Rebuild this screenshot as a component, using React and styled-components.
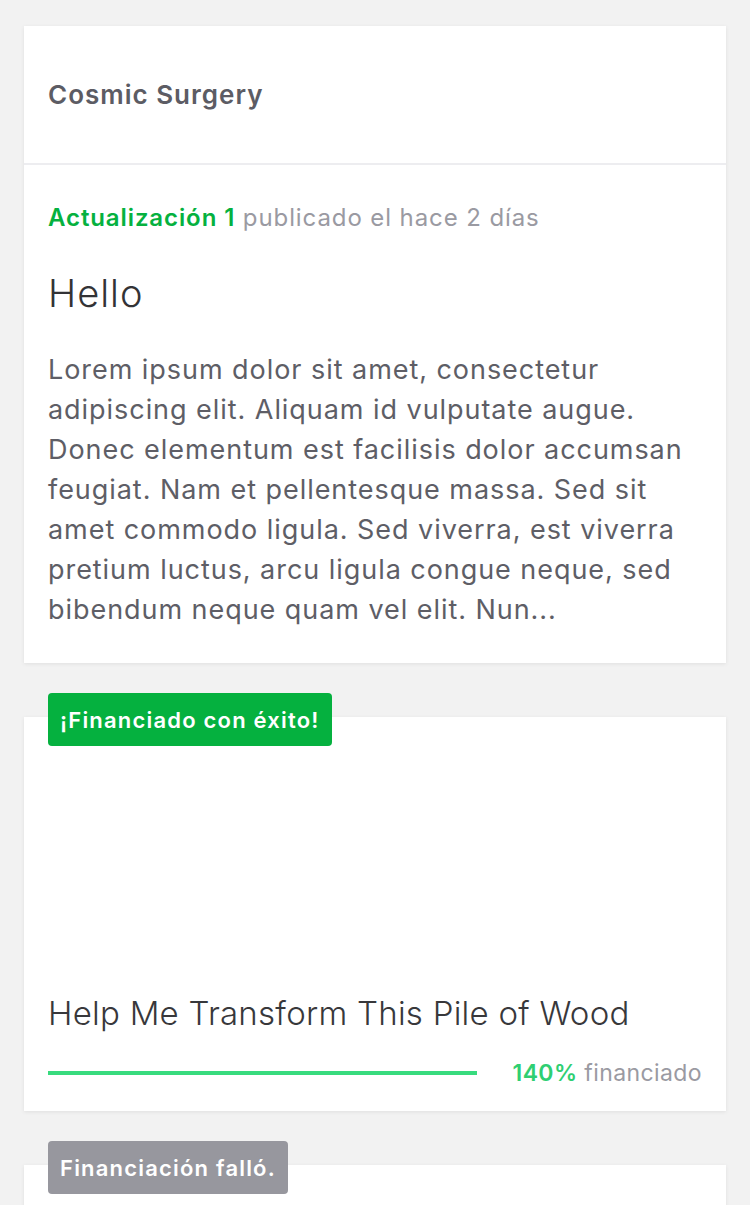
import styled, { createGlobalStyle } from 'styled-components';

const GlobalStyle = createGlobalStyle`
  html, body {
    margin: 0;
    padding: 0;
    background: #f2f2f2;
  }
  body {
    font-family: 'Inter', 'Roboto', sans-serif;
    -webkit-font-smoothing: antialiased;
  }
`;

const projects = [
  { id: 1, status: 'success', label: '¡Financiado con éxito!', title: 'Help Me Transform This Pile of Wood', percent: 140 },
  { id: 2, status: 'failed', label: 'Financiación falló.', title: 'Another Project', percent: 20 },
];

export default function App() {
  return (
    <Page>
      <GlobalStyle />
      <Card>
        <CardHeader>
          <ProjectName>Cosmic Surgery</ProjectName>
        </CardHeader>
        <UpdateBody>
          <UpdateMeta>
            <UpdateNumber>Actualización 1</UpdateNumber> publicado el hace 2 días
          </UpdateMeta>
          <UpdateTitle>Hello</UpdateTitle>
          <UpdateText>
            Lorem ipsum dolor sit amet, consectetur adipiscing elit. Aliquam id vulputate augue.
            Donec elementum est facilisis dolor accumsan feugiat. Nam et pellentesque massa. Sed sit
            amet commodo ligula. Sed viverra, est viverra pretium luctus, arcu ligula congue neque, sed
            bibendum neque quam vel elit. Nun...
          </UpdateText>
        </UpdateBody>
      </Card>

      {projects.map((p) => (
        <ProjectItem key={p.id}>
          <StatusBadge $status={p.status}>{p.label}</StatusBadge>
          <Card>
            <Cover />
            <ProjectInfo>
              <ProjectTitle>{p.title}</ProjectTitle>
              <ProgressRow>
                <ProgressTrack>
                  <ProgressFill style={{ width: `${Math.min(p.percent, 100)}%` }} />
                </ProgressTrack>
                <Funded>
                  <Percent>{p.percent}%</Percent> financiado
                </Funded>
              </ProgressRow>
            </ProjectInfo>
          </Card>
        </ProjectItem>
      ))}
    </Page>
  );
}

const Page = styled.div`
  display: flex;
  flex-direction: column;
  gap: 30px;
  padding: 26px 24px;
`;

const Card = styled.div`
  background: #fff;
  box-shadow: 0 1px 4px rgba(0, 0, 0, 0.08);
`;

const CardHeader = styled.div`
  height: 137px;
  display: flex;
  align-items: center;
  padding: 0 24px;
  border-bottom: 2px solid #ededf0;
`;

const ProjectName = styled.h2`
  margin: 0;
  font-size: 26px;
  font-weight: 600;
  letter-spacing: 1px;
  color: #5c5c64;
`;

const UpdateBody = styled.div`
  padding: 37px 24px 33px;
`;

const UpdateMeta = styled.div`
  font-size: 24px;
  line-height: 32px;
  letter-spacing: 0.9px;
  color: #9a9aa2;
`;

const UpdateNumber = styled.span`
  color: #05b13f;
  font-weight: 600;
`;

const UpdateTitle = styled.h1`
  margin: 36px 0 0;
  font-size: 38px;
  line-height: 46px;
  font-weight: 300;
  letter-spacing: 1px;
  color: #333336;
`;

const UpdateText = styled.p`
  margin: 34px 0 0;
  font-size: 27px;
  line-height: 40px;
  letter-spacing: 0.95px;
  color: #5e5e66;
`;

const ProjectItem = styled.div`
  position: relative;
  padding-top: 24px;
`;

const StatusBadge = styled.span`
  position: absolute;
  top: 0;
  left: 24px;
  z-index: 1;
  height: 53px;
  display: flex;
  align-items: center;
  padding: 0 12px;
  border-radius: 4px;
  font-size: 22px;
  font-weight: 600;
  letter-spacing: 1.2px;
  color: #fff;
  background: ${(p) => (p.$status === 'success' ? '#05b13f' : '#97979e')};
`;

const Cover = styled.div`
  height: 275px;
`;

const ProjectInfo = styled.div`
  padding: 0 24px 23px;
`;

const ProjectTitle = styled.h3`
  margin: 0;
  font-size: 33px;
  line-height: 42px;
  font-weight: 300;
  letter-spacing: 0.25px;
  color: #38383b;
`;

const ProgressRow = styled.div`
  margin-top: 24px;
  height: 30px;
  display: flex;
  align-items: center;
  gap: 36px;
`;

const ProgressTrack = styled.div`
  flex: 1;
  height: 4px;
  background: #e6e6ea;
`;

const ProgressFill = styled.div`
  height: 100%;
  background: #38db7e;
`;

const Funded = styled.div`
  font-size: 23px;
  letter-spacing: 0.4px;
  color: #9a9aa2;
  white-space: nowrap;
`;

const Percent = styled.span`
  font-weight: 600;
  color: #2fcf72;
`;
